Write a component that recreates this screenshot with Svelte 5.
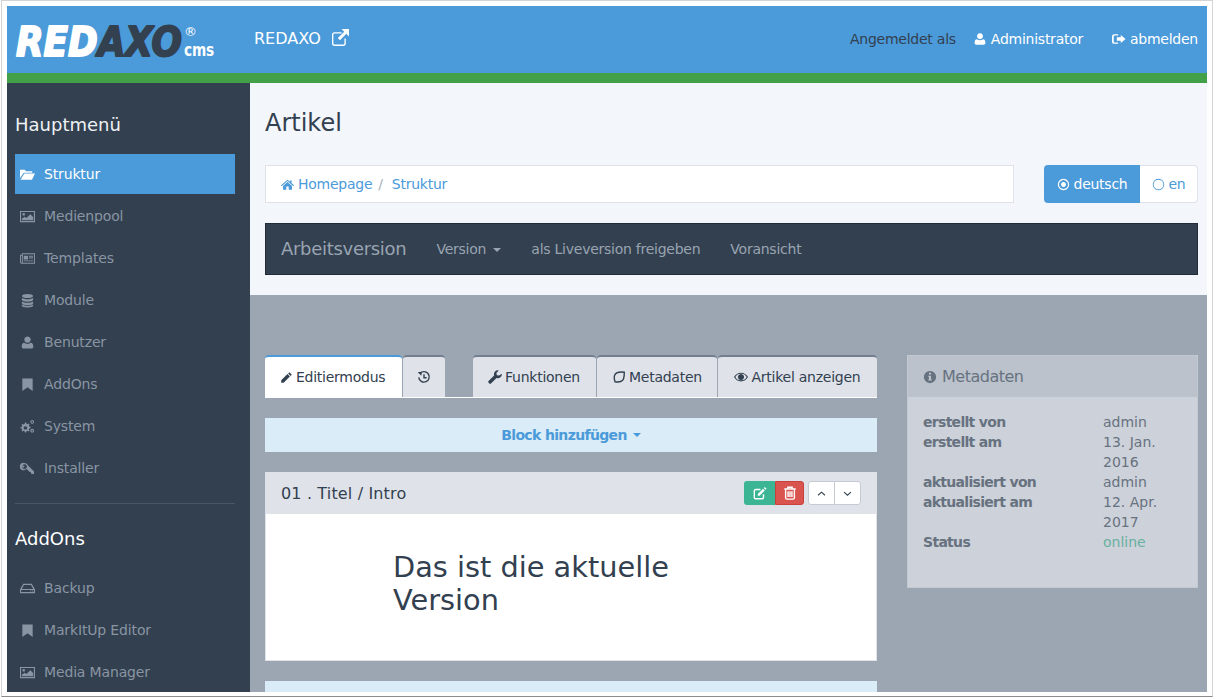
<script>
  const icons = {
    folder: { f: 'M0 3h5l1.5 1.5H13V6H4L0 12z M4.6 7H16l-3.2 6.5H.6z' },
    picture: { f: 'M0 2h16v12H0z M1.2 3.2v9.6h13.6V3.2z M2 12v-1.6l3-2.2 1.8 1.3L11 5.5l3 3V12z M4 4.2a1.4 1.4 0 1 1-.01 0z' },
    news: { f: 'M0 4h2V2.5h14v11H1.5A1.5 1.5 0 0 1 0 12z M1 5v7a.5.5 0 0 0 1 0V5z M3 3.5V12.5h12v-9z M4 5h4.5v4H4z M9.5 5H14v1H9.5z M9.5 7H14v1H9.5z M4 10h10v1H4z' },
    db: { f: 'M8 1c3.3 0 6 .9 6 2.2S11.3 5.4 8 5.4 2 4.5 2 3.2 4.7 1 8 1z M2 5c1 1 3.5 1.6 6 1.6S13 6 14 5v2.2c0 1.2-2.7 2.1-6 2.1S2 8.4 2 7.2z M2 9c1 1 3.5 1.5 6 1.5S13 10 14 9v1.9C14 12.1 11.3 13 8 13s-6-.9-6-2.1z M2 12.3c1 1 3.5 1.5 6 1.5s5-.5 6-1.5v1.4c0 1.2-2.7 1.8-6 1.8s-6-.6-6-1.8z' },
    user: { f: 'M8 1.5a3.4 3.4 0 1 1-.01 0z M4.4 8.3c1 .8 2.2 1.2 3.6 1.2s2.6-.4 3.6-1.2c1.7.2 2.6 1.7 2.6 4 0 1.4-.9 2.2-2.1 2.2H3.9c-1.2 0-2.1-.8-2.1-2.2 0-2.3.9-3.8 2.6-4z' },
    bookmark: { f: 'M2.5 1.5h11v13.5L8 11l-5.500 4z' },
    cogs: { f: 'M5.500 3.500l1 .2.4 1.300 1.200.5 1.200-.6.800.8-.6 1.200.5 1.200 1.300.4v1.100l-1.300.4-.5 1.200.6 1.200-.8.800-1.200-.6-1.200.5-.4 1.300H5.300l-.4-1.300-1.200-.5-1.200.6-.8-.8.6-1.200-.5-1.200L.5 10V8.900l1.300-.4.5-1.200-.6-1.200.8-.8 1.200.6 1.200-.5.4-1.300z M5.800 7.700a1.800 1.800 0 1 0 .01 0z M13 1a2 2 0 1 1-.01 0z M13 2.200a.8.8 0 1 0 .01 0z M13 10.500a2 2 0 1 1-.01 0z M13 11.700a.8.8 0 1 0 .01 0z' },
    key: { f: 'M4.800 2a4 4 0 0 1 3.800 2.800l6.400 6.400v2.600h-2.600l-.8-.8v-1.200h-1.300L6.800 8.300A4 4 0 1 1 4.800 2z M4.800 3.500a2.500 2.500 0 1 0 .01 0z M3.600 4.800a1 1 0 1 0 .01 0z' },
    hdd: { f: 'M3.500 3h9L16 9v4H0V9z M4.200 4.200L2 8.500h12l-2.200-4.300z M1.200 9.700v2.100h13.600V9.700z M11 10.200h1v1h-1z M13 10.200h1v1h-1z' },
    home: { f: 'M8 2l3 2.600V3h2v3.300L16 9l-.8 1L8 3.800.8 10 0 9z M8 5l5.500 4.700V14.500H9.500V10.500h-3v4H2.500V9.700z' },
    ext: { f: 'M2.500 3H9v1.300H2.700A1.200 1.200 0 0 0 1.300 5.700v7.600c0 .7.700 1.400 1.400 1.400h7.600c.7 0 1.400-.7 1.400-1.400V9H13v4.500a2.500 2.500 0 0 1-2.500 2.500h-8A2.500 2.500 0 0 1 0 13.500v-8A2.500 2.500 0 0 1 2.500 3z M9 0h7v7l-2.500-2.500L7.500 10.500 5.500 8.500l6-6z' },
    signout: { f: 'M2.500 2.500H7v1.500H3a1 1 0 0 0-1 1v6a1 1 0 0 0 1 1h4v1.500H2.500A2.500 2.500 0 0 1 0 11V5a2.500 2.500 0 0 1 2.500-2.500z M10 3.500L15.500 8 10 12.500V10H5.500V6H10z' },
    dot: { f: 'M8 1a7 7 0 1 1-.01 0z M8 2.500a5.500 5.500 0 1 0 .01 0z M8 5a3 3 0 1 1-.01 0z' },
    circle: { f: 'M8 1a7 7 0 1 1-.01 0z M8 2a6 6 0 1 0 .01 0z' },
    pencil: { f: 'M11.500 1.500l3 3L13 6 10 3z M9.200 3.800l3 3-7.700 7.700H1.500v-3z' },
    history: { s: 'M3 4.500A6 6 0 1 1 2 8.500 M8 4.800V8.800h3', f: 'M.8 2.500L5.500 2 5 6.500z' },
    wrench: { f: 'M15.800 4.200a4.500 4.500 0 0 1-6 4.800L3.700 15.100a1.700 1.700 0 0 1-2.500 0l-.3-.3a1.700 1.700 0 0 1 0-2.500L7 6.200a4.500 4.500 0 0 1 5.300-5.700L9.600 3.300l.5 2.600 2.600.5z' },
    leaf: { s: 'M14 2.500C9 2 4 2.500 2.800 6.500c-1 3 0 5 .7 7 4 .5 8.500 0 9.700-3.500 1-2.500.8-5 .8-7.500z' },
    eye: { f: 'M8 3c3.400 0 6.300 2 8 5-1.700 3-4.600 5-8 5s-6.300-2-8-5c1.700-3 4.600-5 8-5z M8 4.200A6.900 6.900 0 0 0 1.500 8 6.900 6.900 0 0 0 8 11.800 6.900 6.900 0 0 0 14.500 8 6.900 6.900 0 0 0 8 4.200z M8 4.500a3.500 3.500 0 1 1-.01 0z' },
    info: { f: 'M8 1a7 7 0 1 1-.01 0z M6.800 3v2.200h2.400V3z M6 6.500v1.300h.8v3H6v1.300h4v-1.300h-.8V6.500z' },
    edit: { s: 'M12 9.500V13a1.500 1.500 0 0 1-1.500 1.500h-7.500A1.500 1.500 0 0 1 1.500 13V5.500A1.500 1.500 0 0 1 3 4h5.500', f: 'M13.500 1l2 2-1.200 1.200-2-2z M11.500 3l2 2-6 6h-2V9z' },
    trash: { s: 'M3 4v9.500A1.500 1.500 0 0 0 4.500 15h7a1.500 1.500 0 0 0 1.500-1.500V4 M1.500 3.500h13 M5.500 3.500V1.500h5v2 M5.800 6v6.500 M8 6v6.500 M10.200 6v6.500' },
    up: { s: 'M3 10.500L8 6l5 4.500' },
    down: { s: 'M3 6l5 4.500L13 6' }
  };

  const mainMenu = [
    ['folder', 'Struktur', true],
    ['picture', 'Medienpool'],
    ['news', 'Templates'],
    ['db', 'Module'],
    ['user', 'Benutzer'],
    ['bookmark', 'AddOns'],
    ['cogs', 'System'],
    ['key', 'Installer']
  ];
  const addonMenu = [
    ['hdd', 'Backup'],
    ['bookmark', 'MarkItUp Editor'],
    ['picture', 'Media Manager']
  ];
  const meta = [
    ['erstellt von', 'admin'],
    ['erstellt am', '13. Jan. 2016'],
    ['aktualisiert von', 'admin'],
    ['aktualisiert am', '12. Apr. 2017'],
    ['Status', 'online']
  ];
</script>

{#snippet icon(name, cls = '')}
  <svg class="ic {cls}" viewBox="0 0 16 16" aria-hidden="true">
    {#if icons[name].f}<path d={icons[name].f} fill="currentColor" fill-rule="evenodd" />{/if}
    {#if icons[name].s}<path d={icons[name].s} fill="none" stroke="currentColor" stroke-width="1.600" />{/if}
  </svg>
{/snippet}

<div class="window">
  <div class="page">
    <header class="top">
      <svg class="logo" viewBox="0 0 202 34" aria-label="REDAXO cms">
        <text class="lg" x="1" y="32" textLength="166" lengthAdjust="spacingAndGlyphs"><tspan class="white">RED</tspan><tspan class="dark">AXO</tspan></text>
        <text class="cms" x="169" y="32" textLength="30" lengthAdjust="spacingAndGlyphs">cms</text>
        <text class="reg" x="169" y="12">®</text>
      </svg>
      <a class="brand">REDAXO {@render icon('ext', 'ext')}</a>
      <div class="session">
        <span class="as">Angemeldet als</span>
        <span class="who">{@render icon('user')}Administrator</span>
        <span class="out">{@render icon('signout')}abmelden</span>
      </div>
    </header>

    <div class="shell">
      <aside class="side">
        <h3>Hauptmenü</h3>
        <ul>
          {#each mainMenu as [ic, label, active]}
            <li class:active><span class="mi">{@render icon(ic)}</span>{label}</li>
          {/each}
        </ul>
        <hr />
        <h3 class="second">AddOns</h3>
        <ul>
          {#each addonMenu as [ic, label]}
            <li><span class="mi">{@render icon(ic)}</span>{label}</li>
          {/each}
        </ul>
      </aside>

      <main class="main">
        <section class="upper">
          <h1>Artikel</h1>
          <div class="crumbrow">
            <nav class="crumbs">
              <a>{@render icon('home')}Homepage</a><span class="sep">/</span><a>Struktur</a>
            </nav>
            <div class="lang">
              <span class="on">{@render icon('dot')}deutsch</span>
              <span class="off">{@render icon('circle')}en</span>
            </div>
          </div>
          <div class="verbar">
            <strong>Arbeitsversion</strong>
            <span>Version <i class="caret"></i></span>
            <span>als Liveversion freigeben</span>
            <span>Voransicht</span>
          </div>
        </section>

        <section class="lower">
          <div class="col">
            <div class="tabs">
              <span class="tab active">{@render icon('pencil')}Editiermodus</span>
              <span class="tab hist">{@render icon('history')}</span>
              <span class="tab push">{@render icon('wrench')}Funktionen</span>
              <span class="tab">{@render icon('leaf')}Metadaten</span>
              <span class="tab">{@render icon('eye')}Artikel anzeigen</span>
            </div>
            <div class="addblock">Block hinzufügen <i class="caret"></i></div>
            <article class="slice">
              <div class="slicehead">
                <span>01 . Titel / Intro</span>
                <div class="tools">
                  <span class="b green">{@render icon('edit')}</span><span class="b red">{@render icon('trash')}</span>
                  <span class="b move first">{@render icon('up')}</span><span class="b move">{@render icon('down')}</span>
                </div>
              </div>
              <div class="slicebody"><p>Das ist die aktuelle Version</p></div>
            </article>
            <div class="addblock">Block hinzufügen <i class="caret"></i></div>
          </div>

          <div class="metapanel">
            <div class="metahead">{@render icon('info')}Metadaten</div>
            <dl>
              {#each meta as [k, v]}
                <dt>{k}</dt>
                <dd class:ok={v === 'online'}>{v}</dd>
              {/each}
            </dl>
          </div>
        </section>
      </main>
    </div>
  </div>
</div>

<style>
  :global(body) {
    margin: 0;
    background: #fff;
  }
  .window {
    width: 1212px;
    height: 697px;
    box-sizing: border-box;
    margin-left: 1px;
    padding: 5px;
    border: 1px solid #d4d4d4;
    border-bottom-color: #8c8c8c;
    font: 14px/20px "DejaVu Sans", sans-serif;
    letter-spacing: -0.25px;
    color: #324050;
    background: #fff;
  }
  .page {
    height: 686px;
    overflow: hidden;
    display: flex;
    flex-direction: column;
  }
  .ic {
    width: 14px;
    height: 14px;
    flex: none;
  }

  .top {
    height: 67px;
    flex: none;
    box-sizing: content-box;
    display: flex;
    align-items: center;
    background: #4b9ad9;
    border-bottom: 10px solid #42a048;
    color: #fff;
    padding-right: 9px;
  }
  .logo {
    width: 202px;
    height: 34px;
    margin: 2px 0 0 8px;
    flex: none;
    overflow: visible;
  }
  .lg {
    font: italic 700 41px "DejaVu Sans", sans-serif;
    stroke-width: 2px;
    stroke-linejoin: round;
    letter-spacing: 0;
  }
  .white { fill: #fff; stroke: #fff; }
  .dark { fill: #324050; stroke: #324050; }
  .cms {
    font: 700 17px "DejaVu Sans", sans-serif;
    fill: #fff;
  }
  .reg {
    font: 13px "DejaVu Sans", sans-serif;
    fill: #fff;
  }
  .brand {
    display: flex;
    align-items: center;
    gap: 11px;
    margin: -2px 0 0 37px;
    font-size: 16px;
    letter-spacing: 0;
  }
  .brand :global(.ext) {
    width: 17px;
    height: 17px;
    margin-top: -3px;
  }
  .session {
    margin-left: auto;
    margin-top: -2px;
    display: flex;
    align-items: center;
  }
  .session span {
    display: flex;
    align-items: center;
    gap: 4px;
  }
  .as { margin-right: 17px; color: #324050; }
  .who { margin-right: 29px; }

  .shell {
    flex: 1;
    min-height: 0;
    display: flex;
  }
  .side {
    width: 243px;
    flex: none;
    box-sizing: border-box;
    padding: 31px 15px 0 8px;
    background: #324050;
    color: #fff;
    letter-spacing: -0.15px;
  }
  h3 {
    margin: 0 0 18px;
    font-size: 18px;
    font-weight: 400;
    line-height: 22px;
    color: #eef1f4;
    letter-spacing: 0;
  }
  .second { margin: 24px 0 18px; color: #fff; }
  ul {
    margin: 0;
    padding: 0;
    list-style: none;
  }
  li {
    height: 40px;
    margin-bottom: 2px;
    display: flex;
    align-items: center;
    color: #8a95a3;
  }
  li.active {
    background: #4b9ad9;
    color: #fff;
  }
  .mi {
    width: 29px;
    padding-left: 5px;
    box-sizing: border-box;
    display: flex;
  }
  .mi .ic { width: 15px; height: 15px; }
  hr {
    border: 0;
    border-top: 1px solid #4a5767;
    margin: 15px 0 0;
  }

  .main {
    flex: 1;
    min-width: 0;
  }
  .upper {
    height: 212px;
    box-sizing: border-box;
    padding: 25px 9px 0 15px;
    background: #f3f6fb;
  }
  h1 {
    margin: 0 0 27px;
    font-size: 24px;
    font-weight: 400;
    line-height: 30px;
    color: #324050;
    letter-spacing: 0;
  }
  .crumbrow {
    display: flex;
    justify-content: space-between;
  }
  .crumbs {
    width: 749px;
    height: 38px;
    box-sizing: border-box;
    display: flex;
    align-items: center;
    padding-left: 15px;
    background: #fff;
    border: 1px solid #dfe3e9;
    color: #4b9ad9;
  }
  .crumbs a {
    display: flex;
    align-items: center;
    gap: 4px;
  }
  .crumbs .ic { width: 13px; height: 13px; }
  .sep { margin: 0 9px 0 6px; color: #a9b1bc; }
  .lang {
    display: flex;
    width: 154px;
    height: 38px;
  }
  .lang span {
    display: flex;
    align-items: center;
    gap: 4px;
    box-sizing: border-box;
  }
  .lang .ic { width: 13px; height: 13px; }
  .on {
    width: 96px;
    justify-content: center;
    background: #4b9ad9;
    color: #fff;
    border-radius: 4px 0 0 4px;
  }
  .off {
    flex: 1;
    justify-content: center;
    background: #fff;
    color: #4b9ad9;
    border: 1px solid #dfe3e9;
    border-left: 0;
    border-radius: 0 4px 4px 0;
  }
  .verbar {
    margin-top: 20px;
    height: 52px;
    box-sizing: border-box;
    display: flex;
    align-items: center;
    gap: 30px;
    padding-left: 15px;
    background: #324050;
    border: 1px solid #222c38;
    color: #9aa4b1;
  }
  .verbar strong {
    font-size: 18px;
    font-weight: 400;
    letter-spacing: -0.3px;
  }
  .caret {
    display: inline-block;
    width: 0;
    height: 0;
    margin-left: 3px;
    vertical-align: middle;
    border-top: 4px solid currentColor;
    border-left: 4px solid transparent;
    border-right: 4px solid transparent;
  }

  .lower {
    height: 397px;
    box-sizing: border-box;
    padding: 60px 9px 0 15px;
    display: grid;
    grid-template-columns: 612px 291px;
    column-gap: 30px;
    align-items: start;
    background: #9ca6b2;
  }
  .tabs {
    display: flex;
    gap: 1px;
    height: 42px;
    box-sizing: content-box;
    border-bottom: 1px solid #fff;
  }
  .tab {
    display: flex;
    align-items: center;
    gap: 3px;
    box-sizing: border-box;
    padding: 0 15px;
    background: #dfe3e9;
    border-top: 2px solid #737e8e;
    border-radius: 4px 4px 0 0;
    color: #324050;
    white-space: nowrap;
    flex: none;
  }
  .tab .ic { width: 14px; height: 14px; }
  .tab.active {
    background: #fff;
    border-top-color: #4b9ad9;
    width: 137px;
  }
  .tab.active .ic { width: 13px; height: 13px; }
  .hist { width: 42px; justify-content: center; padding: 0; }
  .push { margin-left: 27px; padding-right: 16px; }
  .tab:last-child { flex: 1; justify-content: center; padding: 0; }
  .addblock {
    margin-top: 20px;
    height: 34px;
    display: flex;
    align-items: center;
    justify-content: center;
    gap: 3px;
    background: #d9ecf7;
    color: #4b9ad9;
    font-weight: 700;
    letter-spacing: -0.65px;
  }
  .slice {
    margin-top: 20px;
    background: #fff;
    border: 1px solid #dfe3e9;
    border-top: 0;
  }
  .slicehead {
    height: 42px;
    display: flex;
    align-items: center;
    justify-content: space-between;
    padding: 0 15px;
    background: #dfe3e9;
    font-size: 16px;
    letter-spacing: 0.15px;
  }
  .slicehead > span { margin-top: 1px; }
  .tools {
    display: flex;
    height: 24px;
  }
  .b {
    display: flex;
    align-items: center;
    justify-content: center;
    box-sizing: border-box;
    color: #fff;
  }
  .green {
    width: 31px;
    background: #3bb594;
    border-radius: 3px 0 0 3px;
  }
  .red {
    width: 29px;
    background: #d9534f;
    border: 1px solid #c9403c;
    border-radius: 0 3px 3px 0;
  }
  .move {
    width: 27px;
    background: #fff;
    color: #324050;
    border: 1px solid #c5cbd5;
    border-radius: 0 3px 3px 0;
    margin-left: -1px;
  }
  .move.first {
    margin-left: 4px;
    border-radius: 3px 0 0 3px;
  }
  .move .ic { width: 11px; height: 11px; }
  .slicebody {
    height: 146px;
    box-sizing: border-box;
    padding: 37px 0 0 127px;
  }
  .slicebody p {
    margin: 0;
    width: 320px;
    font-size: 28.8px;
    line-height: 33px;
    letter-spacing: 0;
  }
  .metapanel {
    height: 233px;
    background: #cdd1d9;
    border: 1px solid #c3c8d1;
    box-sizing: border-box;
    color: #677280;
  }
  .metahead {
    height: 41px;
    display: flex;
    align-items: center;
    gap: 5px;
    padding-left: 15px;
    background: #bbc2cc;
    font-size: 16px;
    letter-spacing: -0.5px;
  }
  dl {
    margin: 0;
    padding: 15px 15px 0;
    display: grid;
    grid-template-columns: 180px 1fr;
  }
  dt { font-weight: 700; letter-spacing: -0.7px; }
  dd { margin: 0; letter-spacing: 0; }
  .ok { color: #68b09f; }
</style>
